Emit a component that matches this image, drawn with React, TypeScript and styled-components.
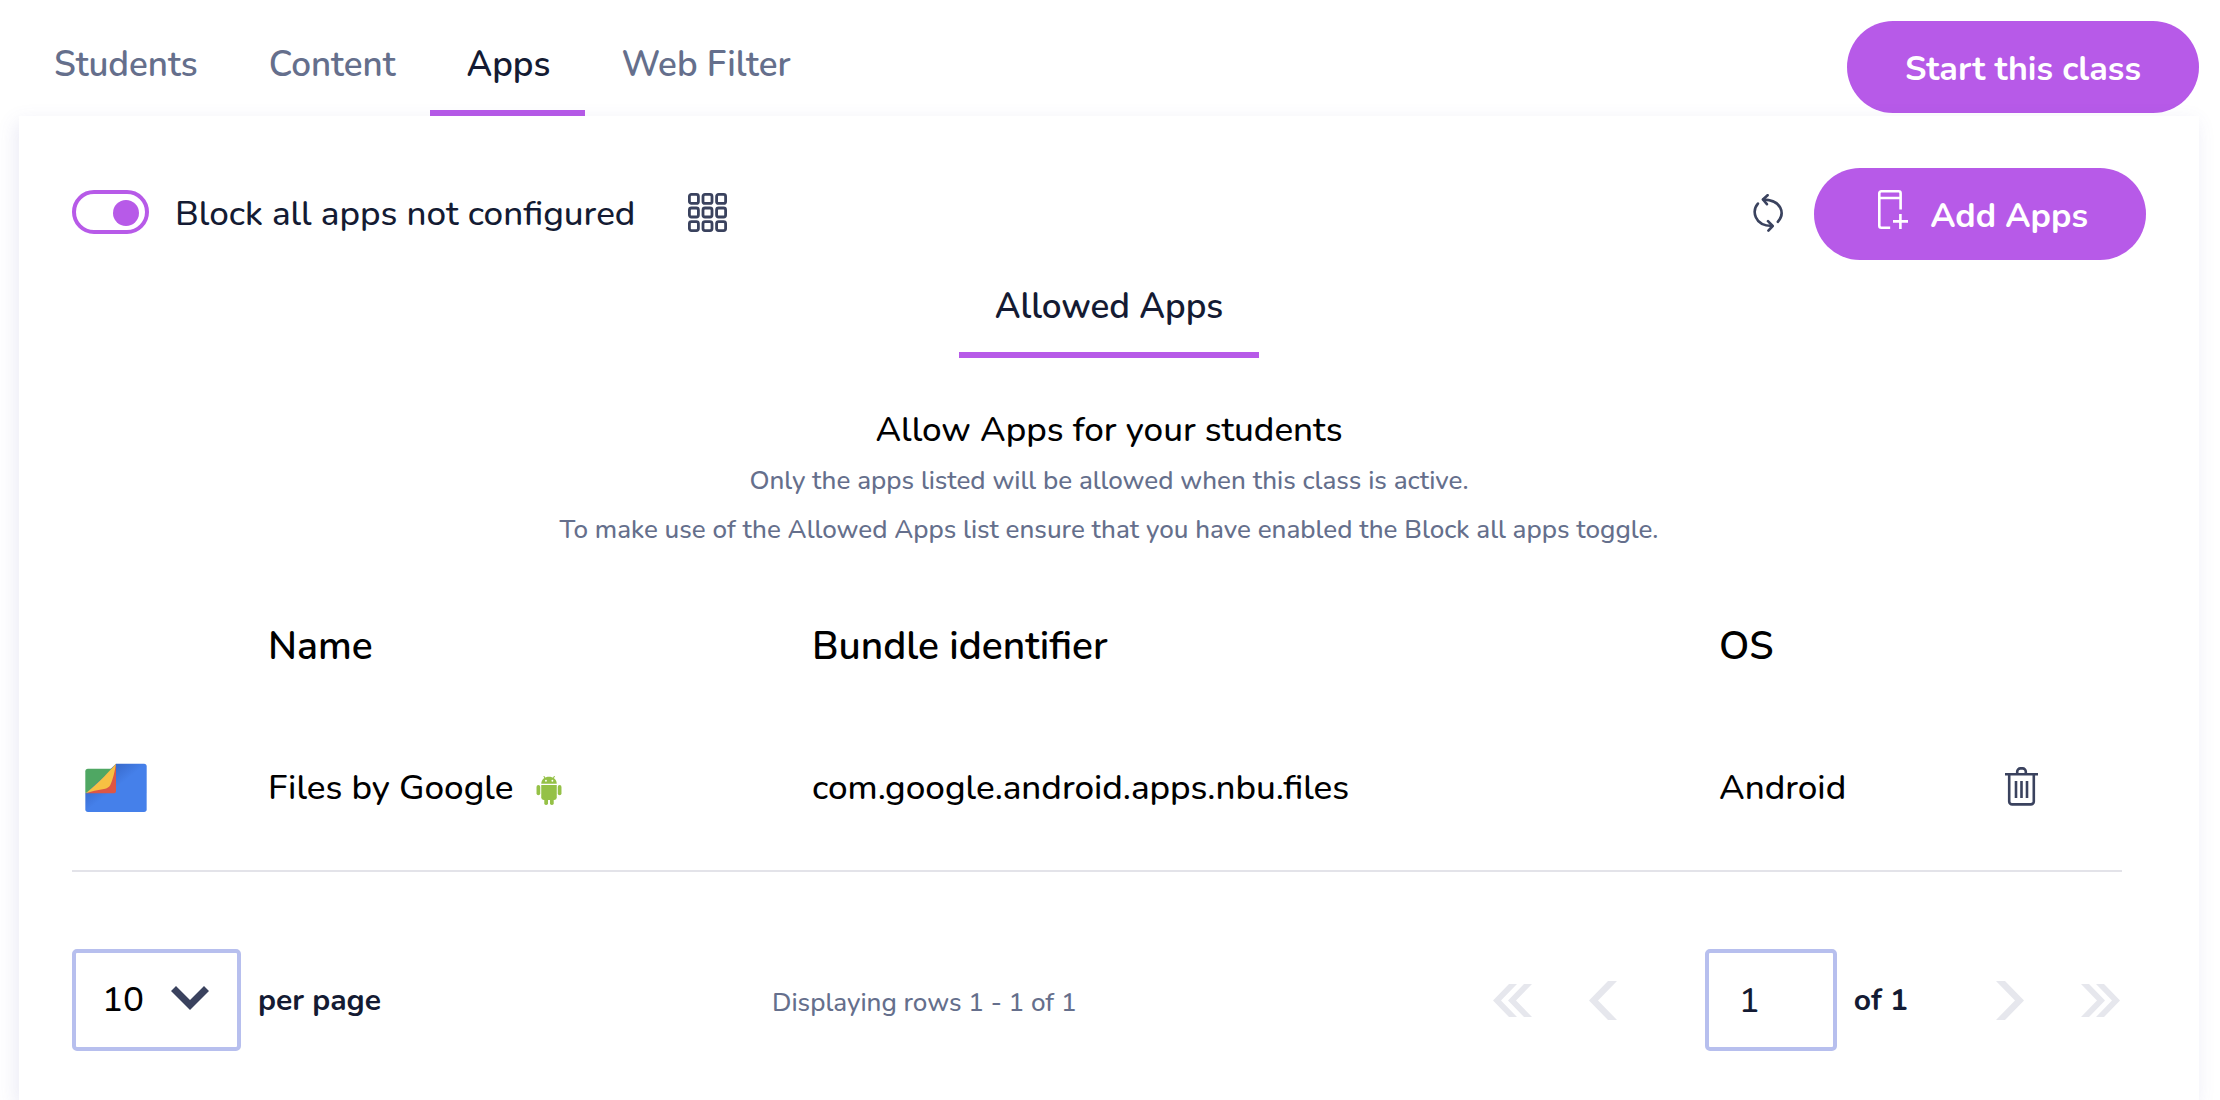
import React, { useState } from "react";
import styled, { createGlobalStyle, css } from "styled-components";

const color = {
  accent: "#b75ae8",
  ink: "#141b33",
  muted: "#656f8c",
  icon: "#3a425e",
  field: "#b7bfee",
  rule: "#e3e3e9",
  disabled: "#e6e7ed",
};

const GlobalStyle = createGlobalStyle`
  *, *::before, *::after { box-sizing: border-box; }
  body {
    margin: 0;
    background: #fff;
    color: #000;
    font-family: Nunito, "Open Sans", "Noto Sans", sans-serif;
    font-size: 35px;
    font-weight: 500;
    line-height: 48px;
  }
  button, input, select { font: inherit; color: inherit; margin: 0; }
  h1, p { margin: 0; }
`;

const Page = styled.div`
  display: flex;
  flex-direction: column;
  min-height: 100vh;
`;

const Header = styled.header`
  display: flex;
  justify-content: space-between;
  align-items: flex-end;
  padding: 0 21px 0 18px;
`;

const Tabs = styled.nav`
  display: flex;
`;

const Tab = styled.a<{ $active?: boolean; $compact?: boolean }>`
  padding: ${(p) => (p.$compact ? "23px 36px 21px" : "41px 35px 21px 36px")};
  border-bottom: 6px solid ${(p) => (p.$active ? color.accent : "transparent")};
  color: ${(p) => (p.$active ? color.ink : color.muted)};
  font-weight: 600;
  text-decoration: none;
`;

const PillButton = styled.button`
  display: flex;
  align-items: center;
  height: 92px;
  padding: 3px 58px 0;
  border: 0;
  border-radius: 46px;
  background: ${color.accent};
  color: #fff;
  font-size: 34px;
  font-weight: 700;
  cursor: pointer;
`;

const StartButton = styled(PillButton)`
  margin-bottom: 3px;
`;

const AddButton = styled(PillButton)`
  gap: 22px;
  padding: 3px 58px 0 64px;

  svg { margin-bottom: 12px; }
`;

const Panel = styled.main`
  flex: 1;
  margin: 0 21px 0 19px;
  padding: 52px 53px 48px;
  background: #fff;
  box-shadow: -3px 6px 18px rgba(90, 90, 180, 0.13);
`;

const Toolbar = styled.div`
  display: flex;
  align-items: center;
  justify-content: space-between;
`;

const ToolGroup = styled.div<{ $gap: number }>`
  display: flex;
  align-items: center;
  gap: ${(p) => p.$gap}px;
`;

const ToggleLabel = styled.label`
  display: flex;
  align-items: center;
  gap: 26px;
  color: ${color.ink};
`;

const Toggle = styled.input`
  appearance: none;
  display: flex;
  align-items: center;
  width: 77px;
  height: 44px;
  padding: 2px 6px 0;
  border: 4px solid ${color.accent};
  border-radius: 22px;
  cursor: pointer;

  ${ToggleLabel} & { margin-bottom: 4px; }

  &::before {
    content: "";
    width: 26px;
    height: 26px;
    border-radius: 50%;
    background: ${color.accent};
  }
  &:checked { justify-content: flex-end; }
`;

const IconButton = styled.button`
  display: flex;
  padding: 0 0 3px;
  border: 0;
  background: none;
  color: ${color.icon};
  cursor: pointer;
`;

const SubTabs = styled.nav`
  display: flex;
  justify-content: center;
`;

const Intro = styled.section`
  margin-top: 48px;
  text-align: center;
`;

const Title = styled.h1`
  margin-bottom: 2px;
  font-size: 35px;
  font-weight: 500;
`;

const Note = styled.p`
  color: ${color.muted};
  font-size: 26px;
  line-height: 49px;
`;

const AppTable = styled.table`
  width: calc(100% - 24px);
  margin-top: 37px;
  border-collapse: collapse;
  table-layout: fixed;
  text-align: left;
`;

const Col = styled.col<{ $width?: number }>`
  ${(p) => p.$width && css`width: ${p.$width}px;`}
`;

const HeadCell = styled.th`
  height: 112px;
  padding: 0;
  font-size: 39px;
  font-weight: 600;
`;

const Cell = styled.td`
  height: 168px;
  padding: 2px 0 0;
  border-bottom: 2px solid ${color.rule};
`;

const IconCell = styled(Cell)`
  padding-left: 13px;

  svg { display: block; }
`;

const NameBox = styled.div`
  display: flex;
  align-items: center;
  gap: 23px;

  svg { margin-top: 6px; }
`;

const Footer = styled.footer`
  display: grid;
  grid-template-columns: 14fr 27fr;
  align-items: center;
  margin: 77px 24px 0 0;
`;

const FieldGroup = styled.div`
  display: flex;
  align-items: center;
  gap: 17px;
`;

const fieldStyle = css`
  height: 102px;
  border: 4px solid ${color.field};
  border-radius: 5px;
  background: #fff;
  outline: 0;
`;

const SelectBox = styled.div`
  position: relative;

  svg {
    position: absolute;
    top: 37px;
    right: 32px;
    pointer-events: none;
  }
`;

const PageSize = styled.select`
  ${fieldStyle}
  appearance: none;
  display: block;
  width: 169px;
  padding: 0 26px;
`;

const PageInput = styled.input`
  ${fieldStyle}
  width: 132px;
  padding: 0 30px;
  color: ${color.ink};
`;

const FieldLabel = styled.label`
  padding-top: 2px;
  color: ${color.ink};
  font-size: 30px;
  font-weight: 700;
`;

const Status = styled.div`
  display: flex;
  align-items: center;
  justify-content: space-between;
`;

const Displaying = styled.span`
  padding-top: 6px;
  color: ${color.muted};
  font-size: 26px;
`;

const Pager = styled.nav`
  display: flex;
  align-items: center;
  gap: 82px;
  padding-right: 2px;
`;

const Steps = styled.div`
  display: flex;
  align-items: center;
  gap: 50px;
`;

const StepButton = styled.button`
  display: flex;
  justify-content: center;
  width: 40px;
  padding: 0;
  border: 0;
  background: none;
  color: ${color.disabled};
`;

const GridIcon = () => (
  <svg width="39" height="39" viewBox="0 0 39 39" fill="none" stroke="currentColor" strokeWidth="2.8">
    {[1.4, 15, 28.6].map((y) =>
      [1.4, 15, 28.6].map((x) => <rect key={`${x}-${y}`} x={x} y={y} width="9" height="9" rx="2" />)
    )}
  </svg>
);

const RefreshIcon = () => (
  <svg width="30" height="38" viewBox="0 0 30 38" fill="none" stroke="currentColor" strokeWidth="2.6" strokeLinecap="round" strokeLinejoin="round">
    <path d="M4.9 9.6C-1 16.5 0.6 31.4 19 32" />
    <path d="M15 27.2L19.7 32L15.4 36.6" />
    <path d="M10.5 5.6C28.5 5.8 32.4 19.5 24.8 27.8" />
    <path d="M14.6 1.2L9.9 5.5L13.9 10.2" />
  </svg>
);

const AddAppIcon = () => (
  <svg width="30" height="39" viewBox="0 0 30 39" fill="none" stroke="currentColor" strokeWidth="2.6">
    <path d="M22.6 19.5V3.3a2 2 0 0 0-2-2H3.3a2 2 0 0 0-2 2v32.4a2 2 0 0 0 2 2h8.9" />
    <path d="M1.5 8H22.5M22.4 24v15M15 31.4h15" />
  </svg>
);

const TrashIcon = () => (
  <svg width="33" height="39" viewBox="0 0 33 39" fill="none" stroke="currentColor" strokeWidth="2.6">
    <path d="M0 7.2h33M12.2 7V4.6a3.2 3.2 0 0 1 3.2-3.2h2.2a3.2 3.2 0 0 1 3.2 3.2V7" />
    <path d="M4.2 7.2v27.2a3 3 0 0 0 3 3h18.6a3 3 0 0 0 3-3V7.2" />
    <path d="M11 14v17M16.5 14v17M22 14v17" />
  </svg>
);

const FilesIcon = () => (
  <svg width="62" height="50" viewBox="27 25 186 150" aria-hidden="true">
    <defs>
      <linearGradient id="files-shade" x1="0" y1="0" x2="1" y2="1">
        <stop offset="0.2" stopColor="#3564c4" />
        <stop offset="0.5" stopColor="#4580ea" />
      </linearGradient>
    </defs>
    <path d="M120 27H204a8 8 0 0 1 8 8V164a8 8 0 0 1-8 8H36a8 8 0 0 1-8-8V115Z" fill="url(#files-shade)" />
    <path d="M36 42H110L30 116a8 8 0 0 1-2-5V50a8 8 0 0 1 8-8Z" fill="#4fa763" />
    <path d="M120 27V108a8 8 0 0 1-8 8H30L104 88Z" fill="#dd5645" />
    <path d="M120 27Q114 66 103 91Q98 100 84 103Q54 107 29 116Q62 88 84 66Q102 47 120 27Z" fill="#f7c143" />
  </svg>
);

const AndroidIcon = () => (
  <svg width="26" height="29" viewBox="45 33 76 86" fill="#95c147" aria-label="Android">
    <path d="M60 56C60 28 106 28 106 56Z" />
    <path d="M72 41l-4-7M95 41l4-7" stroke="#95c147" strokeWidth="3" strokeLinecap="round" />
    <circle cx="74" cy="47" r="2.8" fill="#fff" />
    <circle cx="93" cy="47" r="2.8" fill="#fff" />
    <path d="M60 60H106V97a7 7 0 0 1-7 7H67a7 7 0 0 1-7-7Z" />
    <rect x="46" y="60" width="11" height="30" rx="5.5" />
    <rect x="109" y="60" width="11" height="30" rx="5.5" />
    <rect x="69" y="92" width="11" height="27" rx="5" />
    <rect x="86" y="92" width="11" height="27" rx="5" />
  </svg>
);

const DownIcon = () => (
  <svg width="38" height="24" viewBox="0 0 38 24" fill={color.icon}>
    <path d="M0 5L5 0L19 14L33 0L38 5L19 24Z" />
  </svg>
);

const Chevron = ({ flip }: { flip?: boolean }) => (
  <svg width="28" height="39" viewBox="0 0 28 39" fill="currentColor">
    <path d={flip ? "M0 0H9L28 19.5L9 39H0L19 19.5Z" : "M28 0H19L0 19.5L19 39H28L9 19.5Z"} />
  </svg>
);

const DoubleChevron = ({ flip }: { flip?: boolean }) => (
  <svg width="39" height="33" viewBox="0 0 39 33" fill="currentColor">
    {flip ? (
      <path d="M0 0H8L24 16.5L8 33H0L16 16.5ZM15 0H23L39 16.5L23 33H15L31 16.5Z" />
    ) : (
      <path d="M39 0H31L15 16.5L31 33H39L23 16.5ZM24 0H16L0 16.5L16 33H24L8 16.5Z" />
    )}
  </svg>
);

const tabs = ["Students", "Content", "Apps", "Web Filter"];

const apps = [{ name: "Files by Google", bundle: "com.google.android.apps.nbu.files", os: "Android" }];

export default function App() {
  const [blocked, setBlocked] = useState(true);
  const [page, setPage] = useState("1");

  return (
    <Page>
      <GlobalStyle />
      <Header>
        <Tabs>
          {tabs.map((tab) => (
            <Tab key={tab} href="#" $active={tab === "Apps"}>{tab}</Tab>
          ))}
        </Tabs>
        <StartButton>Start this class</StartButton>
      </Header>

      <Panel>
        <Toolbar>
          <ToolGroup $gap={53}>
            <ToggleLabel>
              <Toggle type="checkbox" role="switch" checked={blocked} onChange={(e) => setBlocked(e.target.checked)} />
              Block all apps not configured
            </ToggleLabel>
            <IconButton aria-label="Choose apps"><GridIcon /></IconButton>
          </ToolGroup>
          <ToolGroup $gap={31}>
            <IconButton aria-label="Refresh"><RefreshIcon /></IconButton>
            <AddButton><AddAppIcon />Add Apps</AddButton>
          </ToolGroup>
        </Toolbar>

        <SubTabs>
          <Tab href="#" $active $compact>Allowed Apps</Tab>
        </SubTabs>

        <Intro>
          <Title>Allow Apps for your students</Title>
          <Note>Only the apps listed will be allowed when this class is active.</Note>
          <Note>To make use of the Allowed Apps list ensure that you have enabled the Block all apps toggle.</Note>
        </Intro>

        <AppTable>
          <colgroup>
            <Col $width={196} />
            <Col $width={544} />
            <Col />
            <Col $width={286} />
            <Col $width={117} />
          </colgroup>
          <thead>
            <tr>
              <HeadCell />
              <HeadCell>Name</HeadCell>
              <HeadCell>Bundle identifier</HeadCell>
              <HeadCell>OS</HeadCell>
              <HeadCell />
            </tr>
          </thead>
          <tbody>
            {apps.map((app) => (
              <tr key={app.bundle}>
                <IconCell><FilesIcon /></IconCell>
                <Cell><NameBox>{app.name}<AndroidIcon /></NameBox></Cell>
                <Cell>{app.bundle}</Cell>
                <Cell>{app.os}</Cell>
                <Cell><IconButton aria-label={`Delete ${app.name}`}><TrashIcon /></IconButton></Cell>
              </tr>
            ))}
          </tbody>
        </AppTable>

        <Footer>
          <FieldGroup>
            <SelectBox>
              <PageSize id="page-size" defaultValue="10">
                <option>10</option>
                <option>25</option>
                <option>50</option>
              </PageSize>
              <DownIcon />
            </SelectBox>
            <FieldLabel htmlFor="page-size">per page</FieldLabel>
          </FieldGroup>
          <Status>
            <Displaying>Displaying rows 1 - 1 of 1</Displaying>
            <Pager aria-label="Pagination">
              <Steps>
                <StepButton disabled aria-label="First page"><DoubleChevron /></StepButton>
                <StepButton disabled aria-label="Previous page"><Chevron /></StepButton>
              </Steps>
              <FieldGroup>
                <PageInput id="page-number" value={page} onChange={(e) => setPage(e.target.value)} />
                <FieldLabel htmlFor="page-number">of 1</FieldLabel>
              </FieldGroup>
              <Steps>
                <StepButton disabled aria-label="Next page"><Chevron flip /></StepButton>
                <StepButton disabled aria-label="Last page"><DoubleChevron flip /></StepButton>
              </Steps>
            </Pager>
          </Status>
        </Footer>
      </Panel>
    </Page>
  );
}
